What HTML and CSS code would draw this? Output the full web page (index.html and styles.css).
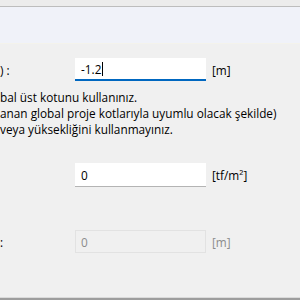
FILE: index.html
```html
<!DOCTYPE html>
<html lang="tr">
<head>
    <meta charset="UTF-8">
    <title>Kot ayarları</title>
    <link rel="stylesheet" href="styles.css">
</head>
<body>
    <div class="window">
        <div class="titlebar"></div>
        <div class="banner"></div>

        <div class="content">
            <div class="row first-row">
                <span class="label">) :</span>
                <div class="field active">-1.2<span class="caret"></span></div>
                <span class="unit">[m]</span>
            </div>

            <div class="note">
                <p>bal üst kotunu kullanınız.</p>
                <p>anan global proje kotlarıyla uyumlu olacak şekilde)</p>
                <p>veya yüksekliğini kullanmayınız.</p>
            </div>

            <div class="row load-row">
                <span class="label"></span>
                <div class="field">0</div>
                <span class="unit">[tf/m²]</span>
            </div>

            <div class="row disabled-row">
                <span class="label">:</span>
                <div class="field disabled">0</div>
                <span class="unit">[m]</span>
            </div>
        </div>

        <div class="bottom-edge"></div>
    </div>
</body>
</html>
```

FILE: styles.css
```css
html, body {
    margin: 0;
    padding: 0;
}

body {
    width: 300px;
    height: 300px;
    overflow: hidden;
    background-color: #f0f0f0;
    font-family: 'Open Sans', 'Noto Sans', sans-serif;
    font-size: 11.8px;
    color: #000;
}

.window {
    display: flex;
    flex-direction: column;
    height: 300px;
}

.titlebar {
    height: 6px;
    background-color: #ececec;
    border-bottom: 1px solid #bdbdbd;
}

.banner {
    height: 36px;
    background-color: #f0f2f9;
    border-bottom: 1px solid #f4f3ec;
}

.content {
    flex: 1;
    padding-top: 14px;
}

.row {
    display: flex;
    align-items: center;
    height: 23px;
}

.label {
    width: 75px;
    white-space: nowrap;
}

.field {
    box-sizing: border-box;
    width: 131px;
    height: 23px;
    padding: 3px 6px;
    background-color: #fff;
    display: flex;
    align-items: center;
}

.field.active {
    border-bottom: 2px solid #0067c0;
}

.caret {
    display: inline-block;
    width: 1px;
    height: 14px;
    background-color: #000;
    margin-left: 1px;
}

.load-row .field {
    box-shadow: 0 1px 0 #b4b4b4;
}

.field.disabled {
    background-color: #f0f0f0;
    border: 1px solid #e2e2e2;
    color: #8c8c8c;
    padding-left: 5px;
}

.unit {
    margin-left: 6px;
}

.disabled-row .unit {
    color: #8c8c8c;
}

.note {
    margin-top: 8px;
}

.note p {
    margin: 0;
    line-height: 16px;
    white-space: nowrap;
}

.load-row {
    margin-top: 26px;
}

.disabled-row {
    margin-top: 44px;
}

.bottom-edge {
    height: 3px;
    border-top: 1px solid #dadada;
    background-color: #9d9d9d;
    box-sizing: border-box;
}
```
